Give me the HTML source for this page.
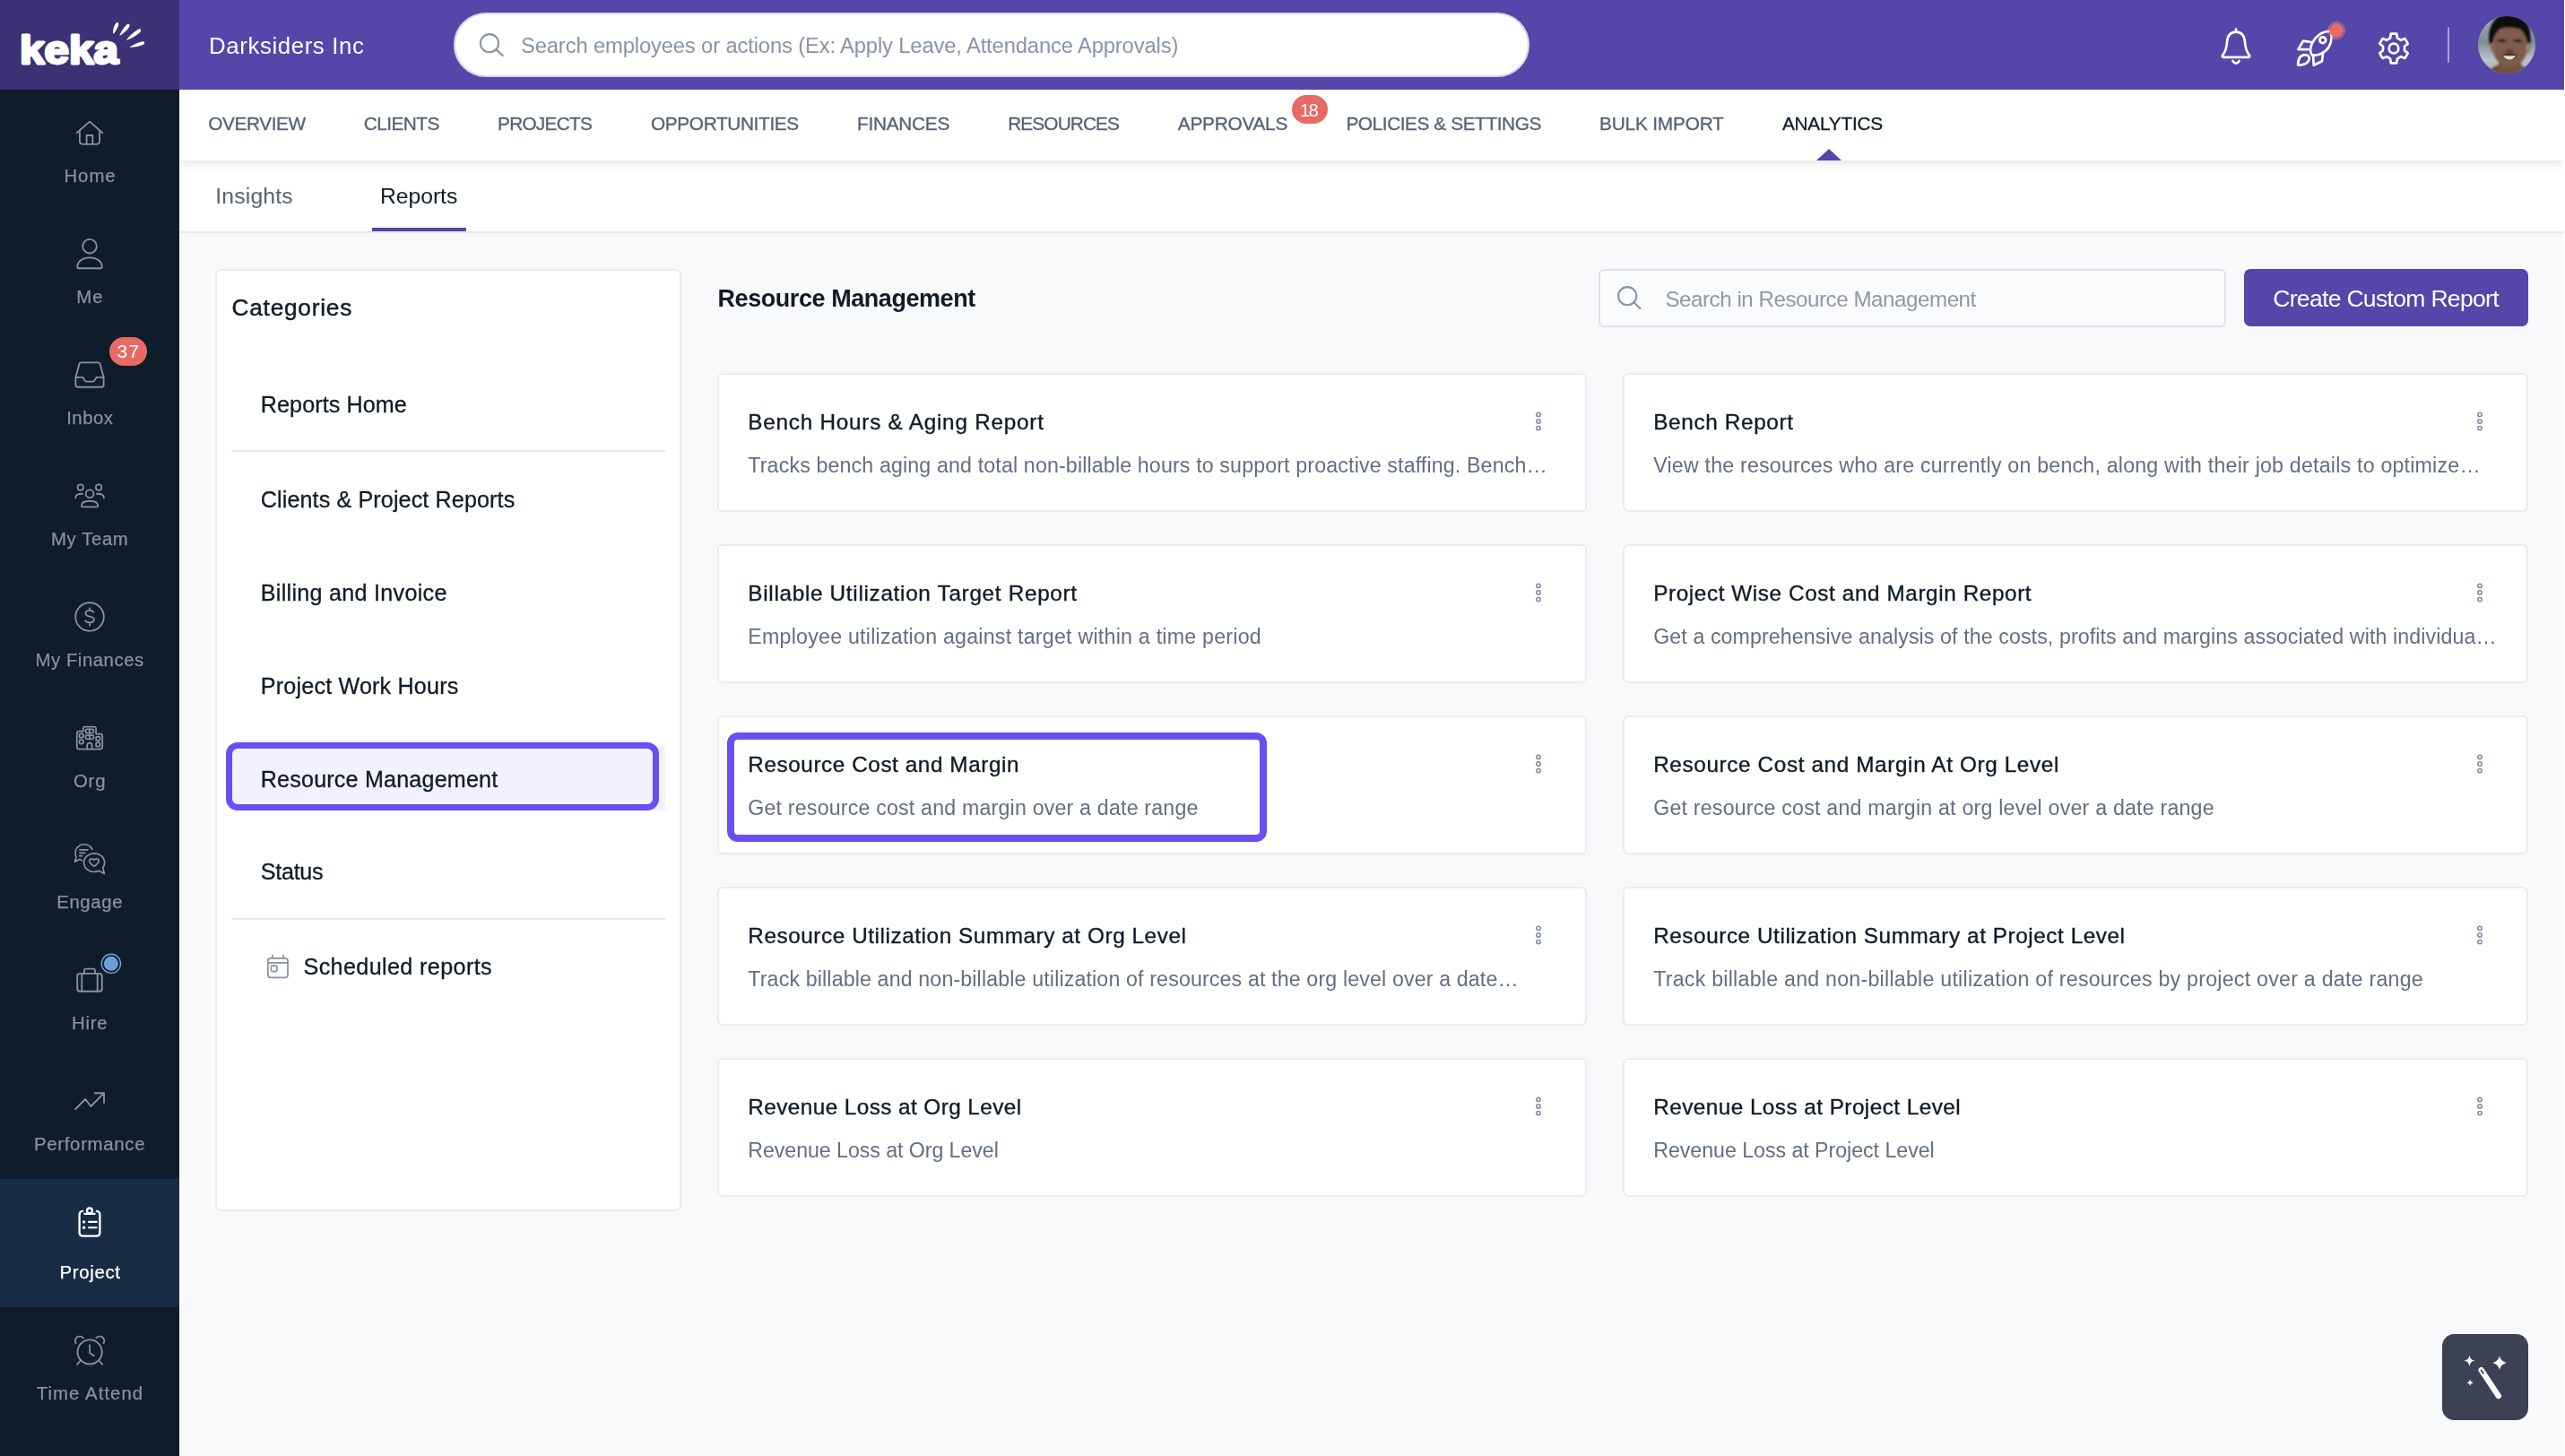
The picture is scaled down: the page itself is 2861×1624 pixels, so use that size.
<!DOCTYPE html>
<html lang="en"><head><meta charset="utf-8"><title>Keka - Reports</title>
<style>
html,body{margin:0;padding:0;}
body{width:2861px;height:1624px;position:relative;background:#f8f9fb;font-family:"Liberation Sans",sans-serif;}
.a{position:absolute;box-sizing:border-box;}
.t{position:absolute;z-index:5;white-space:nowrap;line-height:1;font-family:"Liberation Sans",sans-serif;}
svg{position:absolute;overflow:visible;}
.card{position:absolute;box-sizing:border-box;background:#fff;border:2px solid #ebecef;border-radius:6px;width:969.5px;height:155.2px;}
#txt{position:absolute;left:0;top:0;width:2861px;height:1624px;z-index:5;will-change:transform;}

</style></head>
<body>
<!-- sidebar -->
<div class="a" style="left:0;top:0;width:200px;height:1624px;background:#0f1c2a;"></div>
<div class="a" style="left:0;top:0;width:200px;height:100px;background:#3b3174;"></div>
<div class="a" style="left:0;top:1315px;width:200px;height:142.6px;background:#192c45;"></div>
<!-- header -->
<div class="a" style="left:200px;top:0;width:2661px;height:100px;background:#5546aa;"></div>
<div class="a" style="left:506.4px;top:14.2px;width:1199.2px;height:71.4px;border-radius:36px;background:#fff;border:2px solid #d9d6ea;"></div>
<!-- sub tabs -->
<div class="a" style="left:200px;top:178px;width:2661px;height:82px;background:#fff;border-bottom:2px solid #e8e9ed;"></div>
<div class="a" style="left:415px;top:254.4px;width:105px;height:3.6px;background:#5546aa;"></div>
<!-- nav -->
<div class="a" style="left:200px;top:100px;width:2661px;height:78.5px;background:#fff;box-shadow:0 3px 10px rgba(40,50,70,0.13);"></div>
<div class="a" style="left:2026px;top:166.4px;width:0;height:0;border-left:14px solid transparent;border-right:14px solid transparent;border-bottom:13px solid #5546aa;"></div>
<!-- categories panel -->
<div class="a" style="left:240.2px;top:300px;width:519.8px;height:1051px;background:#fff;border:2px solid #ebecef;border-radius:6px;"></div>
<div class="a" style="left:258px;top:501.7px;width:484px;height:2px;background:#e6e9ee;"></div>
<div class="a" style="left:258px;top:1023.5px;width:484px;height:2px;background:#e6e9ee;"></div>
<div class="a" style="left:258px;top:832px;width:484px;height:72px;background:#f3f0ff;"></div>
<div class="a" style="left:251.6px;top:828px;width:483.4px;height:75.8px;border:7.5px solid #6b4ef2;border-radius:13px;"></div>
<!-- search + button -->
<div class="a" style="left:1782.6px;top:300.2px;width:700.4px;height:64.6px;background:#fafbfc;border:2px solid #dfe2e7;border-radius:6px;"></div>
<div class="a" style="left:2503px;top:300.2px;width:316.8px;height:63.5px;background:#5546aa;border-radius:7px;"></div>
<!-- cards -->
<div class="card" style="left:800.3px;top:416.2px;"></div>
<div class="card" style="left:800.3px;top:607.2px;"></div>
<div class="card" style="left:800.3px;top:798.2px;"></div>
<div class="card" style="left:800.3px;top:989.2px;"></div>
<div class="card" style="left:800.3px;top:1180.2px;"></div>
<div class="card" style="left:1809.6px;top:416.2px;width:1010.4px;"></div>
<div class="card" style="left:1809.6px;top:607.2px;width:1010.4px;"></div>
<div class="card" style="left:1809.6px;top:798.2px;width:1010.4px;"></div>
<div class="card" style="left:1809.6px;top:989.2px;width:1010.4px;"></div>
<div class="card" style="left:1809.6px;top:1180.2px;width:1010.4px;"></div>
<!-- highlight on card -->
<div class="a" style="left:811px;top:817px;width:602.3px;height:121.5px;border:8px solid #6b4ef2;border-radius:12px;"></div>
<!-- wand button -->
<div class="a" style="left:2724.2px;top:1488px;width:95.6px;height:96.2px;background:#3c4153;border-radius:13.5px;"></div>
<!-- badges -->
<div class="a" style="left:1441px;top:106.3px;width:39.6px;height:32px;border-radius:16px;background:#e86a65;"></div>
<div class="a" style="left:122px;top:376px;width:42px;height:32.2px;border-radius:16.1px;background:#e86a65;"></div>
<div class="a" style="left:2860px;top:0;width:1px;height:1624px;background:#fff;z-index:9;"></div>
<!-- avatar -->
<svg class="ov" width="66" height="66" viewBox="-33 -33 66 66" style="left:2763.1px;top:16.9px;">
<defs><clipPath id="avc"><circle cx="0" cy="0" r="32.1"/></clipPath>
<filter id="avb" x="-20%" y="-20%" width="140%" height="140%"><feGaussianBlur stdDeviation="1.3"/></filter>
<linearGradient id="avbg" x1="0" y1="0" x2="0" y2="1"><stop offset="0" stop-color="#a3adb2"/><stop offset="0.45" stop-color="#7f8d94"/><stop offset="0.75" stop-color="#b9c5cc"/><stop offset="1" stop-color="#9aa6ad"/></linearGradient></defs>
<g clip-path="url(#avc)"><rect x="-33" y="-33" width="66" height="66" fill="url(#avbg)"/>
<g filter="url(#avb)">
<path d="M-24 36 C-20 25 -10 21 3 21 C16 21 24 25 28 36Z" fill="#74492f"/>
<rect x="-9" y="12" width="25" height="18" fill="#765242"/>
<ellipse cx="3.2" cy="-9" rx="22.4" ry="21" fill="#0e0d10"/>
<ellipse cx="3.6" cy="1.5" rx="19.6" ry="23.4" fill="#7e5b4c"/>
<ellipse cx="-15.6" cy="3" rx="2.4" ry="5" fill="#8a6656"/><ellipse cx="23.4" cy="4" rx="2.4" ry="5.4" fill="#a07a68"/>
<path d="M-19 2 C-23 -20 -13 -35 3 -35 C19 -35 30 -22 25.6 2 C25 -8 23 -15 15 -17.6 C7 -20 -4 -20 -10 -17 C-16 -14 -18 -6 -19 2Z" fill="#0e0d10"/>
<ellipse cx="-5.6" cy="-4.6" rx="5" ry="1.7" fill="#2d1c17"/><ellipse cx="12.6" cy="-4.6" rx="5" ry="1.7" fill="#2d1c17"/>
<ellipse cx="3.4" cy="6.6" rx="4.6" ry="1.6" fill="#5d3b30"/>
<ellipse cx="3" cy="12.4" rx="8.6" ry="3.4" fill="#50302a"/>
</g>
<path d="M-4.2 11.9 Q2.9 12.7 10 11.9 Q7.4 16.4 2.9 16.4 Q-1.6 16.4 -4.2 11.9Z" fill="#eadbd4"/>
</g></svg>
<svg class="ov" width="2861" height="1624" viewBox="0 0 2861 1624" style="left:0;top:0;z-index:4;">
<!-- logo -->
<text x="21.9" y="70.5" font-family="Liberation Sans, sans-serif" font-weight="700" font-size="44.3" fill="#fff" stroke="#fff" stroke-width="2.8" stroke-linejoin="round" textLength="110.2" lengthAdjust="spacingAndGlyphs">keka</text>
<g fill="#fff">
<path d="M126.3 38 C125.6 33 127.6 27 130.2 25.2 C132.6 24.6 132.6 27.6 131.6 29.8 C130.3 33 128.4 36 126.3 38Z"/>
<path d="M133.3 40 C135 35 139 29 142.2 27 C145 26 145.2 29 143.6 31 C140.8 34.6 137 38 133.3 40Z"/>
<path d="M140.4 45 C143.6 40.6 150.4 34.6 154.6 32.4 C157.4 31.6 158 34.4 156 36.2 C151.6 40 146 43.4 140.4 45Z"/>
<path d="M144.2 52.6 C148 50 154.6 47 159 46.2 C161.8 46.2 161.8 49 159.4 50 C154.8 51.8 149.4 52.8 144.2 52.6Z"/>
</g>
<!-- sidebar icons -->
<g fill="none" stroke="#8691a1" stroke-width="1.85" stroke-linecap="round" stroke-linejoin="round">
<!-- home -->
<path d="M85.6 148.2 L100 135.6 L114.4 148.2 M88.9 146 V157.6 Q88.9 160.8 92.1 160.8 H107.9 Q111.1 160.8 111.1 157.6 V146 M96.6 160.8 V151 H103.3 V160.8"/>
<!-- me -->
<circle cx="100" cy="274.7" r="7.8"/>
<path d="M86.2 298 C86.2 291.5 92 287.3 100 287.3 C108 287.3 113.8 291.5 113.8 298 Q113.8 299.2 112.6 299.2 H87.4 Q86.2 299.2 86.2 298Z"/>
<!-- inbox -->
<path d="M84.4 420.8 L88.6 405.6 Q89 404.3 90.4 404.3 H109.6 Q111 404.3 111.4 405.6 L115.6 420.8 V429.5 Q115.6 431.7 113.4 431.7 H86.6 Q84.4 431.7 84.4 429.5 Z M84.4 420.8 H92.4 L94.6 424.6 Q95.2 425.6 96.4 425.6 H103.6 Q104.8 425.6 105.4 424.6 L107.6 420.8 H115.6"/>
<!-- team -->
<circle cx="100.1" cy="550.8" r="4.4"/>
<circle cx="89.8" cy="543.7" r="3.25" stroke-width="1.7"/>
<circle cx="110.1" cy="543.7" r="3.25" stroke-width="1.7"/>
<path d="M90.9 564.2 C90.9 560.4 95 558.7 100.1 558.7 C105.2 558.7 109.3 560.4 109.3 564.2 Q109.3 565.4 108.1 565.4 H92.1 Q90.9 565.4 90.9 564.2Z"/>
<path d="M84.2 555.4 C84.2 552.2 86.6 550.6 92.2 550.8 M115.9 555.4 C115.9 552.2 113.5 550.6 107.9 550.8"/>
<!-- finances -->
<circle cx="100" cy="688" r="15.8"/>
<path d="M104.4 682.9 C103.6 681.6 102 680.9 100 680.9 C97.4 680.9 95.5 682.2 95.5 684.2 C95.5 686.2 97.2 687 100 687.6 C102.8 688.2 104.9 689 104.9 691 C104.9 693.1 102.8 694.3 100 694.3 C97.8 694.3 96.1 693.6 95.2 692.4 M100 678.2 V680.9 M100 694.3 V697.6"/>
<!-- org -->
<g stroke-width="1.75">
<path d="M88.3 835.5 Q85.8 835.5 85.8 833 V818.2 Q85.8 815.7 88.3 815.7 H92.8 V812.8 Q92.8 810.5 95.1 810.5 H104.8 Q107.1 810.5 107.1 812.8 V818.6 H111.7 Q114.2 818.6 114.2 821.1 V833 Q114.2 835.5 111.7 835.5 Z"/>
<path d="M97.2 835.4 V831.4 Q97.2 828.7 99.95 828.7 Q102.7 828.7 102.7 831.4 V835.4"/>
<rect x="95.4" y="813.3" width="9.1" height="4.3" rx="1.6"/><path d="M99.95 813.3 V817.6"/>
<rect x="95.4" y="820" width="9.1" height="4.3" rx="1.6"/><path d="M99.95 820 V824.3"/>
<rect x="88.5" y="818.3" width="4.4" height="4.4" rx="1.3"/>
<rect x="88.5" y="825.1" width="4.4" height="4.4" rx="1.3"/>
<rect x="107.1" y="821.6" width="4.4" height="4.4" rx="1.3"/>
<rect x="107.1" y="828.3" width="4.4" height="4.4" rx="1.3"/>
</g>
<!-- engage -->
<g stroke-width="1.7">
<path d="M102.9 947.4 A9.7 9.7 0 1 0 84.9 956.2 L83.5 961.3 L88.6 958.5 L91.2 959.6"/>
<path d="M88.9 947.8 H97.7 M88.9 951.3 H94.7 M88.7 954.6 H91.4"/>
<path d="M114.6 967.9 A11.5 10.3 0 1 0 110.3 971.3 L116.4 974.4 Z"/>
<path d="M105 966.2 C101.4 963.8 99.9 962.2 99.9 960.4 C99.9 957.6 103.6 957 105 959.4 C106.4 957 110.1 957.6 110.1 960.4 C110.1 962.2 108.6 963.8 105 966.2Z"/>
</g>
<!-- hire -->
<rect x="86.2" y="1085.9" width="27.6" height="19.8" rx="3"/>
<path d="M94 1085.9 V1082.6 Q94 1080.6 96 1080.6 H104 Q106 1080.6 106 1082.6 V1085.9 M91.3 1085.9 V1105.7 M108.7 1085.9 V1105.7"/>
<!-- performance -->
<path d="M84.2 1237 L95.2 1226 L101.4 1234 L115.6 1219.6 M105.8 1219.2 H116 V1230"/>
<!-- time attend -->
<circle cx="100.1" cy="1507.9" r="13.6"/>
<path d="M100.1 1500.4 V1509 L104.8 1512.2 M89.4 1518 L86 1521.9 M110.8 1518 L114.2 1521.9 M84.7 1498.3 A5.1 5.1 0 0 1 92.9 1492.3 M115.5 1498.3 A5.1 5.1 0 0 0 107.3 1492.3"/>
</g>
<!-- hire dot -->
<circle cx="123.9" cy="1074.8" r="8" fill="#6d9fd5"/>
<circle cx="123.9" cy="1074.8" r="10.6" fill="none" stroke="#6d9fd5" stroke-width="1.5"/>
<!-- project (active) -->
<g fill="none" stroke="#fff" stroke-width="2.3" stroke-linecap="round" stroke-linejoin="round">
<path d="M92.2 1350.9 Q88.6 1351.2 88.6 1354.9 V1375 Q88.6 1378.6 92.2 1378.6 H107.8 Q111.4 1378.6 111.4 1375 V1354.9 Q111.4 1351.2 107.8 1350.9"/>
<circle cx="99.95" cy="1350.4" r="2.9"/>
<path d="M94.4 1353.9 H105.6"/>
<path d="M99.1 1362.9 H107.7 M99.1 1369.2 H107.7" stroke-width="2.1"/>
</g>
<circle cx="93.6" cy="1362.9" r="1.7" fill="#fff"/><circle cx="93.6" cy="1369.2" r="1.7" fill="#fff"/>
<!-- header search icon -->
<g fill="none" stroke="#8894a6" stroke-width="2.1" stroke-linecap="round">
<circle cx="546" cy="48.2" r="10.1"/><path d="M553.4 55.4 L560.8 62"/>
<circle cx="1815.2" cy="330.2" r="10.1"/><path d="M1822.6 337.4 L1829.4 344"/>
</g>
<!-- bell -->
<g fill="none" stroke="#fff" stroke-width="2.7" stroke-linecap="round" stroke-linejoin="round">
<path d="M2494 32.6 V35.4 M2494 35.6 C2486.6 35.6 2484.4 41.6 2484 47 C2483.6 54 2481.4 58.6 2479.2 61.4 Q2478 63.6 2480.4 63.8 H2507.6 Q2510 63.6 2508.8 61.4 C2506.6 58.6 2504.4 54 2504 47 C2503.6 41.6 2501.4 35.6 2494 35.6Z M2490.4 68 Q2494 73.4 2497.6 68"/>
<!-- rocket -->
<path d="M2600.2 35 C2589.6 34.4 2581 41.4 2577.6 52 C2576.6 55.4 2577 58.8 2578.8 61.2 C2582.6 62.6 2589.2 60.6 2593.6 57 C2599.4 52 2601.6 43.4 2600.2 35Z"/>
<circle cx="2590.8" cy="44.7" r="3.4"/>
<path d="M2578.4 47.2 L2569 45.6 L2563.4 55.2 H2574.6"/>
<path d="M2591.2 58 L2590 68.2 L2580.8 72.8 L2580 61.4"/>
<path d="M2563.2 72.6 C2563.2 66 2565.4 61.4 2571 61.2 C2574.4 61.2 2576.2 63.6 2575.6 66.2 C2574.6 70.4 2569.4 72.6 2563.2 72.6Z"/>
<!-- gear -->
<circle cx="2670" cy="54" r="5.3"/>
<path d="M2666.0 42.5 L2666.8 37.7 L2673.2 37.7 L2674.0 42.5 L2678.0 44.8 L2682.5 43.1 L2685.7 48.6 L2682.0 51.7 L2682.0 56.3 L2685.7 59.4 L2682.5 64.9 L2678.0 63.2 L2674.0 65.5 L2673.2 70.3 L2666.8 70.3 L2666.0 65.5 L2662.0 63.2 L2657.5 64.9 L2654.3 59.4 L2658.0 56.3 L2658.0 51.7 L2654.3 48.6 L2657.5 43.1 L2662.0 44.8Z"/>
</g>
<circle cx="2606" cy="34" r="7.9" fill="#ea6b66"/>
<circle cx="2606" cy="34" r="9.3" fill="none" stroke="#ea8f93" stroke-width="0.8"/>
<rect x="2730" y="30.3" width="2" height="39.6" fill="#a9a1d6"/>
<!-- calendar -->
<g fill="none" stroke="#8590a3" stroke-width="1.7" stroke-linecap="round" stroke-linejoin="round">
<rect x="298.8" y="1068.9" width="22.2" height="21.5" rx="3.2"/>
<path d="M298.8 1073.9 H321 M303.9 1065.4 V1068.6 M316 1065.4 V1068.6"/>
<rect x="302.4" y="1077.2" width="6.6" height="6.5" rx="1.6"/>
</g>
<!-- wand -->
<g fill="#fff">
<path d="M2767.7 1528.2 L2786.8 1557" stroke="#fff" stroke-width="6.4" stroke-linecap="round" fill="none"/>
<path d="M2767.6 1528.4 L2769.8 1531.8" stroke="#3c4153" stroke-width="1.8" stroke-linecap="round" fill="none"/>
<path d="M2754.4 1511.5 Q2755 1517.1 2760.6 1517.7 Q2755 1518.3 2754.4 1523.9 Q2753.8 1518.3 2748.2 1517.7 Q2753.8 1517.1 2754.4 1511.5Z"/>
<path d="M2788 1512.4 Q2789.6 1518.5 2795.7 1520.1 Q2789.6 1521.7 2788 1527.8 Q2786.4 1521.7 2780.3 1520.1 Q2786.4 1518.5 2788 1512.4Z"/>
<path d="M2755.1 1538.3 Q2755.5 1541.8 2759 1542.2 Q2755.5 1542.6 2755.1 1546.1 Q2754.7 1542.6 2751.2 1542.2 Q2754.7 1541.8 2755.1 1538.3Z"/>
</g>
<g fill="none" stroke="#7f8a9e" stroke-width="1.5">
<circle cx="1716" cy="462.4" r="2.2"/>
<circle cx="1716" cy="470.0" r="2.2"/>
<circle cx="1716" cy="477.6" r="2.2"/>
<circle cx="2766" cy="462.4" r="2.2"/>
<circle cx="2766" cy="470.0" r="2.2"/>
<circle cx="2766" cy="477.6" r="2.2"/>
<circle cx="1716" cy="653.4" r="2.2"/>
<circle cx="1716" cy="661.0" r="2.2"/>
<circle cx="1716" cy="668.6" r="2.2"/>
<circle cx="2766" cy="653.4" r="2.2"/>
<circle cx="2766" cy="661.0" r="2.2"/>
<circle cx="2766" cy="668.6" r="2.2"/>
<circle cx="1716" cy="844.4" r="2.2"/>
<circle cx="1716" cy="852.0" r="2.2"/>
<circle cx="1716" cy="859.6" r="2.2"/>
<circle cx="2766" cy="844.4" r="2.2"/>
<circle cx="2766" cy="852.0" r="2.2"/>
<circle cx="2766" cy="859.6" r="2.2"/>
<circle cx="1716" cy="1035.4" r="2.2"/>
<circle cx="1716" cy="1043.0" r="2.2"/>
<circle cx="1716" cy="1050.6" r="2.2"/>
<circle cx="2766" cy="1035.4" r="2.2"/>
<circle cx="2766" cy="1043.0" r="2.2"/>
<circle cx="2766" cy="1050.6" r="2.2"/>
<circle cx="1716" cy="1226.4" r="2.2"/>
<circle cx="1716" cy="1234.0" r="2.2"/>
<circle cx="1716" cy="1241.6" r="2.2"/>
<circle cx="2766" cy="1226.4" r="2.2"/>
<circle cx="2766" cy="1234.0" r="2.2"/>
<circle cx="2766" cy="1241.6" r="2.2"/>
</g>
</svg>

<div id="txt">
<span class="t" id="t0" style="left:233.0px;top:38.5px;font-size:25.84px;color:#ffffff;letter-spacing:0.595px;">Darksiders Inc</span>
<span class="t" id="t1" style="left:581.0px;top:39.8px;font-size:23.74px;color:#8894a6;letter-spacing:-0.124px;">Search employees or actions (Ex: Apply Leave, Attendance Approvals)</span>
<span class="t" id="t2" style="left:232.3px;top:128.2px;font-size:20.81px;color:#566274;letter-spacing:-0.403px;-webkit-text-stroke:0.3px #566274;">OVERVIEW</span>
<span class="t" id="t3" style="left:405.8px;top:128.2px;font-size:20.81px;color:#566274;letter-spacing:-0.557px;-webkit-text-stroke:0.3px #566274;">CLIENTS</span>
<span class="t" id="t4" style="left:555.0px;top:128.2px;font-size:20.81px;color:#566274;letter-spacing:-0.734px;-webkit-text-stroke:0.3px #566274;">PROJECTS</span>
<span class="t" id="t5" style="left:726.0px;top:128.2px;font-size:20.81px;color:#566274;letter-spacing:-0.357px;-webkit-text-stroke:0.3px #566274;">OPPORTUNITIES</span>
<span class="t" id="t6" style="left:956.0px;top:128.2px;font-size:20.81px;color:#566274;letter-spacing:-0.265px;-webkit-text-stroke:0.3px #566274;">FINANCES</span>
<span class="t" id="t7" style="left:1124.2px;top:128.2px;font-size:20.81px;color:#566274;letter-spacing:-0.869px;-webkit-text-stroke:0.3px #566274;">RESOURCES</span>
<span class="t" id="t8" style="left:1313.8px;top:128.2px;font-size:20.81px;color:#566274;letter-spacing:-0.244px;-webkit-text-stroke:0.3px #566274;">APPROVALS</span>
<span class="t" id="t9" style="left:1501.4px;top:128.2px;font-size:20.81px;color:#566274;letter-spacing:-0.414px;-webkit-text-stroke:0.3px #566274;">POLICIES &amp; SETTINGS</span>
<span class="t" id="t10" style="left:1784.0px;top:128.2px;font-size:20.81px;color:#566274;letter-spacing:-0.181px;-webkit-text-stroke:0.3px #566274;">BULK IMPORT</span>
<span class="t" id="t11" style="left:1987.9px;top:128.2px;font-size:20.81px;color:#101b28;letter-spacing:-0.216px;-webkit-text-stroke:0.3px #101b28;">ANALYTICS</span>
<span class="t" id="t12" style="left:1450.0px;top:112.8px;font-size:20.25px;color:#ffffff;letter-spacing:-1.731px;">18</span>
<span class="t" id="t13" style="left:240.2px;top:206.6px;font-size:24.72px;color:#566274;letter-spacing:0.185px;">Insights</span>
<span class="t" id="t14" style="left:424.0px;top:206.6px;font-size:24.72px;color:#101b28;letter-spacing:-0.044px;">Reports</span>
<span class="t" id="t15" style="left:71.4px;top:186.0px;font-size:20.39px;color:#8691a1;letter-spacing:0.980px;-webkit-text-stroke:0.25px #8691a1;">Home</span>
<span class="t" id="t16" style="left:85.3px;top:321.1px;font-size:20.39px;color:#8691a1;letter-spacing:0.987px;-webkit-text-stroke:0.25px #8691a1;">Me</span>
<span class="t" id="t17" style="left:74.2px;top:456.0px;font-size:20.39px;color:#8691a1;letter-spacing:0.489px;-webkit-text-stroke:0.25px #8691a1;">Inbox</span>
<span class="t" id="t18" style="left:56.9px;top:591.1px;font-size:20.39px;color:#8691a1;letter-spacing:0.603px;-webkit-text-stroke:0.25px #8691a1;">My Team</span>
<span class="t" id="t19" style="left:39.5px;top:726.1px;font-size:20.39px;color:#8691a1;letter-spacing:0.520px;-webkit-text-stroke:0.25px #8691a1;">My Finances</span>
<span class="t" id="t20" style="left:82.0px;top:861.2px;font-size:20.39px;color:#8691a1;letter-spacing:0.766px;-webkit-text-stroke:0.25px #8691a1;">Org</span>
<span class="t" id="t21" style="left:63.2px;top:996.2px;font-size:20.39px;color:#8691a1;letter-spacing:0.610px;-webkit-text-stroke:0.25px #8691a1;">Engage</span>
<span class="t" id="t22" style="left:80.0px;top:1131.1px;font-size:20.39px;color:#8691a1;letter-spacing:0.780px;-webkit-text-stroke:0.25px #8691a1;">Hire</span>
<span class="t" id="t23" style="left:38.0px;top:1266.1px;font-size:20.39px;color:#8691a1;letter-spacing:0.686px;-webkit-text-stroke:0.25px #8691a1;">Performance</span>
<span class="t" id="t24" style="left:66.4px;top:1408.5px;font-size:20.39px;color:#ffffff;letter-spacing:0.696px;-webkit-text-stroke:0.25px #fff;">Project</span>
<span class="t" id="t25" style="left:40.8px;top:1543.7px;font-size:20.39px;color:#8691a1;letter-spacing:1.043px;-webkit-text-stroke:0.25px #8691a1;">Time Attend</span>
<span class="t" id="t26" style="left:130.6px;top:382.3px;font-size:20.95px;color:#ffffff;letter-spacing:1.303px;">37</span>
<span class="t" id="t27" style="left:258.5px;top:330.0px;font-size:26.26px;color:#101b28;letter-spacing:0.761px;-webkit-text-stroke:0.45px #101b28;">Categories</span>
<span class="t" id="t28" style="left:290.8px;top:438.9px;font-size:25.14px;color:#101b28;letter-spacing:0.092px;-webkit-text-stroke:0.3px #101b28;">Reports Home</span>
<span class="t" id="t29" style="left:290.8px;top:544.7px;font-size:25.14px;color:#101b28;letter-spacing:0.114px;-webkit-text-stroke:0.3px #101b28;">Clients &amp; Project Reports</span>
<span class="t" id="t30" style="left:290.8px;top:649.0px;font-size:25.14px;color:#101b28;letter-spacing:0.282px;-webkit-text-stroke:0.3px #101b28;">Billing and Invoice</span>
<span class="t" id="t31" style="left:290.8px;top:752.8px;font-size:25.14px;color:#101b28;letter-spacing:0.186px;-webkit-text-stroke:0.3px #101b28;">Project Work Hours</span>
<span class="t" id="t32" style="left:290.8px;top:856.8px;font-size:25.14px;color:#101b28;letter-spacing:0.179px;-webkit-text-stroke:0.3px #101b28;">Resource Management</span>
<span class="t" id="t33" style="left:290.8px;top:960.4px;font-size:25.14px;color:#101b28;letter-spacing:-0.287px;-webkit-text-stroke:0.3px #101b28;">Status</span>
<span class="t" id="t34" style="left:338.5px;top:1066.2px;font-size:25.14px;color:#101b28;letter-spacing:0.386px;-webkit-text-stroke:0.3px #101b28;">Scheduled reports</span>
<span class="t" id="t35" style="left:800.5px;top:319.5px;font-size:26.96px;color:#101b28;letter-spacing:-0.410px;font-weight:700;">Resource Management</span>
<span class="t" id="t36" style="left:1857.4px;top:321.7px;font-size:24.16px;color:#8d98a8;letter-spacing:-0.463px;">Search in Resource Management</span>
<span class="t" id="t37" style="left:2535.2px;top:320.2px;font-size:26.54px;color:#ffffff;letter-spacing:-0.685px;">Create Custom Report</span>
<span class="t" id="t38" style="left:834.3px;top:459.1px;font-size:24.3px;color:#101b28;letter-spacing:0.758px;-webkit-text-stroke:0.35px #101b28;">Bench Hours &amp; Aging Report</span>
<span class="t" id="t39" style="left:834.3px;top:507.5px;font-size:23.18px;color:#636e81;letter-spacing:0.153px;">Tracks bench aging and total non-billable hours to support proactive staffing. Bench…</span>
<span class="t" id="t40" style="left:834.3px;top:650.1px;font-size:24.3px;color:#101b28;letter-spacing:0.693px;-webkit-text-stroke:0.35px #101b28;">Billable Utilization Target Report</span>
<span class="t" id="t41" style="left:834.3px;top:698.5px;font-size:23.18px;color:#636e81;letter-spacing:0.244px;">Employee utilization against target within a time period</span>
<span class="t" id="t42" style="left:834.3px;top:841.1px;font-size:24.3px;color:#101b28;letter-spacing:0.573px;-webkit-text-stroke:0.35px #101b28;">Resource Cost and Margin</span>
<span class="t" id="t43" style="left:834.3px;top:889.5px;font-size:23.18px;color:#636e81;letter-spacing:0.195px;">Get resource cost and margin over a date range</span>
<span class="t" id="t44" style="left:834.3px;top:1032.1px;font-size:24.3px;color:#101b28;letter-spacing:0.568px;-webkit-text-stroke:0.35px #101b28;">Resource Utilization Summary at Org Level</span>
<span class="t" id="t45" style="left:834.3px;top:1080.5px;font-size:23.18px;color:#636e81;letter-spacing:0.149px;">Track billable and non-billable utilization of resources at the org level over a date…</span>
<span class="t" id="t46" style="left:834.3px;top:1223.1px;font-size:24.3px;color:#101b28;letter-spacing:0.436px;-webkit-text-stroke:0.35px #101b28;">Revenue Loss at Org Level</span>
<span class="t" id="t47" style="left:834.3px;top:1271.5px;font-size:23.18px;color:#636e81;letter-spacing:-0.055px;">Revenue Loss at Org Level</span>
<span class="t" id="t48" style="left:1844.2px;top:459.1px;font-size:24.3px;color:#101b28;letter-spacing:0.657px;-webkit-text-stroke:0.35px #101b28;">Bench Report</span>
<span class="t" id="t49" style="left:1844.2px;top:507.5px;font-size:23.18px;color:#636e81;letter-spacing:0.214px;">View the resources who are currently on bench, along with their job details to optimize…</span>
<span class="t" id="t50" style="left:1844.2px;top:650.1px;font-size:24.3px;color:#101b28;letter-spacing:0.598px;-webkit-text-stroke:0.35px #101b28;">Project Wise Cost and Margin Report</span>
<span class="t" id="t51" style="left:1844.2px;top:698.5px;font-size:23.18px;color:#636e81;letter-spacing:0.105px;">Get a comprehensive analysis of the costs, profits and margins associated with individua…</span>
<span class="t" id="t52" style="left:1844.2px;top:841.1px;font-size:24.3px;color:#101b28;letter-spacing:0.629px;-webkit-text-stroke:0.35px #101b28;">Resource Cost and Margin At Org Level</span>
<span class="t" id="t53" style="left:1844.2px;top:889.5px;font-size:23.18px;color:#636e81;letter-spacing:0.212px;">Get resource cost and margin at org level over a date range</span>
<span class="t" id="t54" style="left:1844.2px;top:1032.1px;font-size:24.3px;color:#101b28;letter-spacing:0.564px;-webkit-text-stroke:0.35px #101b28;">Resource Utilization Summary at Project Level</span>
<span class="t" id="t55" style="left:1844.2px;top:1080.5px;font-size:23.18px;color:#636e81;letter-spacing:0.248px;">Track billable and non-billable utilization of resources by project over a date range</span>
<span class="t" id="t56" style="left:1844.2px;top:1223.1px;font-size:24.3px;color:#101b28;letter-spacing:0.462px;-webkit-text-stroke:0.35px #101b28;">Revenue Loss at Project Level</span>
<span class="t" id="t57" style="left:1844.2px;top:1271.5px;font-size:23.18px;color:#636e81;letter-spacing:-0.028px;">Revenue Loss at Project Level</span>
</div>
</body></html>
